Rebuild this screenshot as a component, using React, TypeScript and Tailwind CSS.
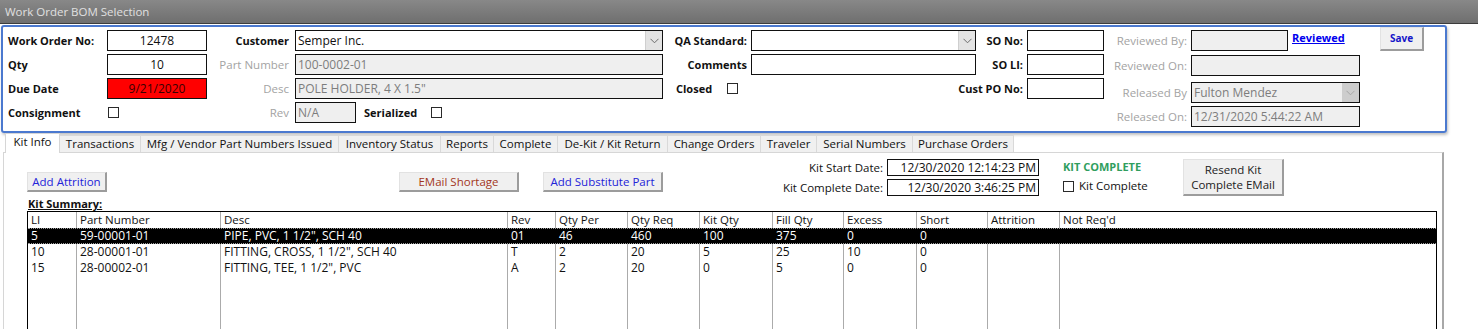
import React from "react";

const font = "font-['Open_Sans',sans-serif]";

function Chevron({ color = "#6b6b6b" }: { color?: string }) {
  return (
    <svg width="9" height="6" viewBox="0 0 9 6">
      <polyline points="0.5,0.8 4.5,4.8 8.5,0.8" fill="none" stroke={color} strokeWidth="1" />
    </svg>
  );
}

function Check() {
  return <span className="inline-block w-[11px] h-[11px] border border-[#2a2a2a] bg-white" />;
}

function Box({
  w,
  children,
  className = "",
}: {
  w: string;
  children?: React.ReactNode;
  className?: string;
}) {
  return (
    <div className={`${w} h-[21px] border border-[#111] flex items-center overflow-hidden whitespace-nowrap text-[12px] font-normal ${className}`}>
      {children}
    </div>
  );
}

// right aligned labels overflow to the left (flex-end)
function Label({ children, className = "" }: { children: React.ReactNode; className?: string }) {
  return <div className={`h-[21px] leading-[21px] whitespace-nowrap flex ${className}`}>{children}</div>;
}

function WinButton({
  children,
  className = "",
}: {
  children: React.ReactNode;
  className?: string;
}) {
  return (
    <div
      className={`bg-[#f0f0f0] border-t border-l border-t-[#e2e2e2] border-l-[#e2e2e2] border-r-2 border-b-2 border-r-[#9c9c9c] border-b-[#9c9c9c] flex items-center justify-center text-center ${className}`}
    >
      {children}
    </div>
  );
}

const tabs = [
  { name: "Kit Info", w: "w-[55px]" },
  { name: "Transactions", w: "w-[81px]" },
  { name: "Mfg / Vendor Part Numbers Issued", w: "w-[198px]" },
  { name: "Inventory Status", w: "w-[102px]" },
  { name: "Reports", w: "w-[53px]" },
  { name: "Complete", w: "w-[64px]" },
  { name: "De-Kit / Kit Return", w: "w-[110px]" },
  { name: "Change Orders", w: "w-[93px]" },
  { name: "Traveler", w: "w-[56px]" },
  { name: "Serial Numbers", w: "w-[96px]" },
  { name: "Purchase Orders", w: "w-[101px]" },
];

const headers = ["LI", "Part Number", "Desc", "Rev", "Qty Per", "Qty Req", "Kit Qty", "Fill Qty", "Excess", "Short", "Attrition", "Not Req'd"];

const rows = [
  ["5", "59-00001-01", 'PIPE, PVC, 1 1/2", SCH 40', "01", "46", "460", "100", "375", "0", "0", "", ""],
  ["10", "28-00001-01", 'FITTING, CROSS, 1 1/2", SCH 40', "T", "2", "20", "5", "25", "10", "0", "", ""],
  ["15", "28-00002-01", 'FITTING, TEE, 1 1/2", PVC', "A", "2", "20", "0", "5", "0", "0", "", ""],
];

const grid = "grid grid-cols-[49px_144px_287px_48px_72px_72px_73px_71px_73px_71px_72px_1fr]";

function KitTable() {
  return (
    <div className="ml-[23px] w-[1410px] border-t border-l border-r border-black bg-white text-[#111]">
      <div className={`${grid} h-[16px] text-[11.5px]`}>
        {headers.map((h, i) => (
          <div key={h} className={`pl-[3px] leading-[16px] whitespace-nowrap ${i < 11 ? "border-r border-[#ababab]" : ""}`}>
            {h}
          </div>
        ))}
      </div>
      {rows.map((r, ri) => (
        <div
          key={ri}
          className={`${grid} text-[12px] ${ri === 0 ? "h-[16px] bg-black text-white border-y border-dotted border-[#9a9a9a]" : "h-[16px]"}`}
        >
          {r.slice(0, 12).map((c, i) => (
            <div
              key={i}
              className={`pl-[3px] whitespace-nowrap ${ri === 0 ? "leading-[14px]" : "leading-[16px]"} ${
                i < 11 ? (ri === 0 ? "border-r border-black" : "border-r border-[#ababab]") : ""
              }`}
            >
              {c}
            </div>
          ))}
        </div>
      ))}
      <div className={`${grid} h-[120px]`}>
        {headers.map((h, i) => (
          <div key={h} className={i < 11 ? "border-r border-[#ababab]" : ""} />
        ))}
      </div>
    </div>
  );
}

export default function App() {
  return (
    <div className={`${font} w-[1478px] h-[329px] overflow-hidden bg-white text-[11.5px] text-[#111]`}>
      {/* title bar */}
      <div className="h-[24px] bg-gradient-to-b from-[#888888] to-[#6f6f6f] border-b border-[#3c3c3c] pl-[5px] text-[11.5px] leading-[23px] text-[#e0e0e0]">
        Work Order BOM Selection
      </div>

      {/* header frame */}
      <div className="mt-[1px] ml-[1px] w-[1446px] h-[108px] border-2 border-[#4b79cf] rounded-[3px] shadow-[1px_2px_3px_rgba(0,0,0,0.25)] flex items-start pt-[3px]">
        {/* col 1 */}
        <div className="pl-[5px] flex flex-col gap-[3px] font-bold text-[11px]">
          {[
            ["Work Order No:", <Box key="a" w="w-[100px]" className="justify-center">12478</Box>],
            ["Qty", <Box key="b" w="w-[100px]" className="justify-center">10</Box>],
            ["Due Date", <Box key="c" w="w-[100px]" className="justify-center bg-[#ff0000] text-[#3a0000]">9/21/2020</Box>],
            ["Consignment", <div key="d" className="h-[21px] flex items-center pl-[1px]"><Check /></div>],
          ].map(([l, f], i) => (
            <div key={i} className="flex">
              <Label className="w-[99px]">{l as string}</Label>
              {f as React.ReactNode}
            </div>
          ))}
        </div>

        {/* col 2 */}
        <div className="flex flex-col gap-[3px]">
          <div className="flex">
            <Label className="w-[88px] justify-end pr-[6px] font-bold text-[11px]">Customer</Label>
            <Box w="w-[368px]" className="bg-white">
              <span className="flex-1 pl-[2px]">Semper Inc.</span>
              <span className="w-[17px] h-[19px] bg-[#e3e3e3] border-l border-[#cfcfcf] flex items-center justify-center">
                <Chevron />
              </span>
            </Box>
          </div>
          <div className="flex">
            <Label className="w-[88px] justify-end pr-[6px] text-[#a3a3a3]">Part Number</Label>
            <Box w="w-[368px]" className="bg-[#efefef] text-[#7d7d7d] pl-[2px]">100-0002-01</Box>
          </div>
          <div className="flex">
            <Label className="w-[88px] justify-end pr-[6px] text-[#a3a3a3]">Desc</Label>
            <Box w="w-[368px]" className="bg-[#efefef] text-[#7d7d7d] pl-[2px]">POLE HOLDER, 4 X 1.5"</Box>
          </div>
          <div className="flex items-center">
            <Label className="w-[88px] justify-end pr-[6px] text-[#a3a3a3]">Rev</Label>
            <Box w="w-[61px]" className="bg-[#efefef] text-[#7d7d7d] pl-[2px]">N/A</Box>
            <Label className="ml-[8px] w-[67px] font-bold text-[11px]">Serialized</Label>
            <Check />
          </div>
        </div>

        {/* col 3 */}
        <div className="flex flex-col gap-[3px] font-bold text-[11px]">
          <div className="flex">
            <Label className="w-[88px] justify-end pr-[4px]">QA Standard:</Label>
            <Box w="w-[225px]" className="bg-white justify-end">
              <span className="w-[17px] h-[19px] bg-[#e3e3e3] border-l border-[#cfcfcf] flex items-center justify-center">
                <Chevron />
              </span>
            </Box>
          </div>
          <div className="flex">
            <Label className="w-[88px] justify-end pr-[4px]">Comments</Label>
            <Box w="w-[225px]" className="bg-white" />
          </div>
          <div className="flex items-center">
            <Label className="w-[64px] pl-[13px]">Closed</Label>
            <Check />
          </div>
        </div>

        {/* col 4 */}
        <div className="flex flex-col gap-[3px] font-bold text-[11px]">
          {["SO No:", "SO LI:", "Cust PO No:"].map((l) => (
            <div key={l} className="flex">
              <Label className="w-[51px] justify-end pr-[4px]">{l}</Label>
              <Box w="w-[77px]" className="bg-white" />
            </div>
          ))}
        </div>

        {/* col 5 */}
        <div className="flex flex-col text-[#a3a3a3]">
          <div className="flex items-start">
            <Label className="w-[87px] justify-end pr-[4px]">Reviewed By:</Label>
            <Box w="w-[97px]" className="bg-[#efefef]" />
            <div className="w-[92px] pl-[4px] h-[16px] leading-[16px] text-[11px] font-bold text-[#0000ee] underline">Reviewed</div>
            <WinButton className="-mt-[3px] w-[44px] h-[24px] text-[10px] font-bold text-[#1414c8]">Save</WinButton>
          </div>
          <div className="flex mt-[4px]">
            <Label className="w-[87px] justify-end pr-[4px]">Reviewed On:</Label>
            <Box w="w-[169px]" className="bg-[#efefef]" />
          </div>
          <div className="flex mt-[6px]">
            <Label className="w-[87px] justify-end pr-[4px]">Released By</Label>
            <Box w="w-[169px]" className="bg-[#efefef] text-[#7d7d7d]">
              <span className="flex-1 pl-[2px]">Fulton Mendez</span>
              <span className="w-[17px] h-[19px] bg-[#cdcdcd] flex items-center justify-center">
                <Chevron color="#a8a8a8" />
              </span>
            </Box>
          </div>
          <div className="flex mt-[3px]">
            <Label className="w-[87px] justify-end pr-[4px]">Released On:</Label>
            <Box w="w-[169px]" className="bg-[#efefef] text-[#7d7d7d] pl-[2px]">12/31/2020 5:44:22 AM</Box>
          </div>
        </div>
      </div>

      {/* tabs */}
      <div className="h-[19px] flex items-end pl-[5px]">
        {tabs.map((t, i) =>
          i === 0 ? (
            <div
              key={t.name}
              className={`${t.w} relative z-10 -mb-px h-[20px] bg-white border-t border-l border-r border-[#d6d6d6] text-center leading-[16px] whitespace-nowrap`}
            >
              {t.name}
            </div>
          ) : (
            <div
              key={t.name}
              className={`${t.w} h-[17px] bg-[#f0f0f0] border-t border-r border-[#d9d9d9] text-center leading-[16px] whitespace-nowrap`}
            >
              {t.name}
            </div>
          )
        )}
      </div>

      {/* tab panel */}
      <div className="ml-[3px] w-[1441px] h-[180px] border-t border-l border-[#d6d6d6] border-r-2 border-r-[#a8a8a8]">
        <div className="flex items-start h-[44px]">
          <WinButton className="ml-[23px] mt-[19px] w-[80px] h-[20px] text-[#2323d9]">Add Attrition</WinButton>
          <WinButton className="ml-[292px] mt-[19px] w-[120px] h-[20px] text-[#a3361c]">EMail Shortage</WinButton>
          <WinButton className="ml-[24px] mt-[19px] w-[120px] h-[20px] text-[#2323d9]">Add Substitute Part</WinButton>
          <div className="mt-[6px] flex flex-col gap-[3px]">
            {[
              ["Kit Start Date:", "12/30/2020 12:14:23 PM"],
              ["Kit Complete Date:", "12/30/2020 3:46:25 PM"],
            ].map(([l, v]) => (
              <div key={l} className="flex">
                <div className="w-[224px] pr-[4px] text-right h-[17px] leading-[17px]">{l}</div>
                <div className="w-[152px] h-[17px] border border-[#111] text-right pr-[2px] leading-[15px] text-[12px]">{v}</div>
              </div>
            ))}
          </div>
          <div className="ml-[24px] w-[120px] mt-[6px]">
            <div className="h-[16px] leading-[16px] font-bold text-[11px] text-[#2f9e5e]">KIT COMPLETE</div>
            <div className="mt-[3px] flex items-center gap-[5px] h-[16px]">
              <Check />
              <span>Kit Complete</span>
            </div>
          </div>
          <WinButton className="mt-[6px] w-[101px] h-[37px] leading-[15px] text-[#222]">
            Resend Kit
            <br />
            Complete EMail
          </WinButton>
        </div>
        <div className="ml-[24px] h-[14px] leading-[13px] font-bold text-[11px] underline">Kit Summary:</div>
        <KitTable />
      </div>
    </div>
  );
}
